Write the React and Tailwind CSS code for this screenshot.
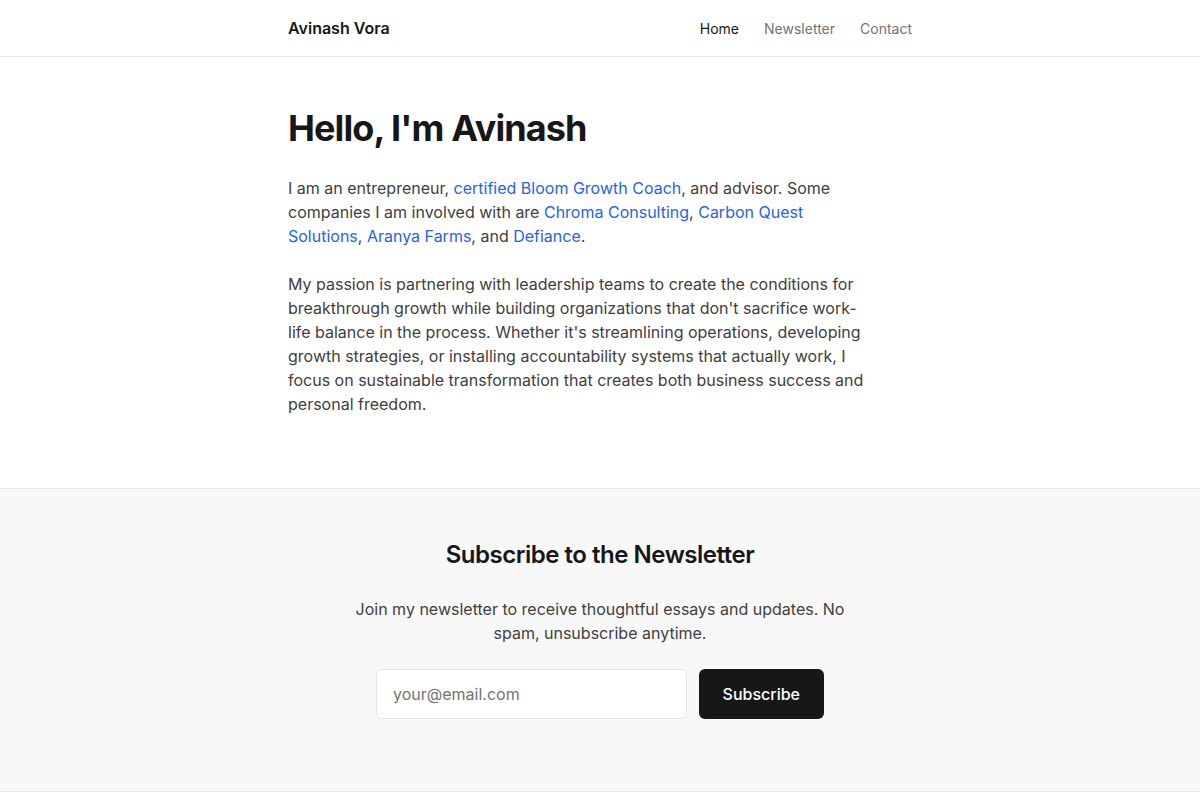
import { useState } from 'react';

const links = [
    { label: 'Home', active: true },
    { label: 'Newsletter', active: false },
    { label: 'Contact', active: false },
];

const A = ({ children }) => (
    <a href="#" className="text-[#2563eb] hover:underline">{children}</a>
);

const App = () => {
    const [email, setEmail] = useState('');

    return (
        <div className="min-h-screen bg-white text-[#171717]" style={{ fontFamily: 'Inter, "Noto Sans", sans-serif' }}>
            {/* Header */}
            <header className="border-b border-[#e5e5e5]">
                <div className="mx-auto max-w-[624px] h-14 flex items-center justify-between">
                    <a href="#" className="text-base font-semibold text-[#171717]">Avinash Vora</a>
                    <nav className="flex items-center gap-[25px] text-sm pt-0.5">
                        {links.map((l) => (
                            <a
                                key={l.label}
                                href="#"
                                className={l.active ? 'text-[#171717]' : 'text-[#737373] hover:text-[#171717]'}
                            >
                                {l.label}
                            </a>
                        ))}
                    </nav>
                </div>
            </header>

            {/* Intro */}
            <main className="mx-auto max-w-[624px] pt-[51px] pb-[72px]">
                <h1 className="text-4xl leading-10 font-bold tracking-tight mb-7">Hello, I'm Avinash</h1>
                <div className="max-w-xl text-base leading-6 text-[#404040] space-y-6">
                    <p>
                        I am an entrepreneur, <A>certified Bloom Growth Coach</A>, and advisor. Some companies I am
                        involved with are <A>Chroma Consulting</A>, <A>Carbon Quest Solutions</A>, <A>Aranya Farms</A>,
                        and <A>Defiance</A>.
                    </p>
                    <p>
                        My passion is partnering with leadership teams to create the conditions for breakthrough growth
                        while building organizations that don't sacrifice work-life balance in the process. Whether it's
                        streamlining operations, developing growth strategies, or installing accountability systems that
                        actually work, I focus on sustainable transformation that creates both business success and
                        personal freedom.
                    </p>
                </div>
            </main>

            {/* Newsletter */}
            <section className="border-y border-[#e5e5e5] bg-[#f8f8f8]">
                <div className="mx-auto max-w-[624px] pt-[50px] pb-[72px] flex flex-col items-center text-center">
                    <h2 className="text-2xl leading-8 font-semibold tracking-[-0.02em] mb-[26px]">Subscribe to the Newsletter</h2>
                    <p className="max-w-[500px] text-base leading-6 text-[#404040] mb-6">
                        Join my newsletter to receive thoughtful essays and updates. No spam, unsubscribe anytime.
                    </p>
                    <form onSubmit={(e) => e.preventDefault()} className="w-full max-w-md flex gap-3">
                        <input
                            type="email"
                            value={email}
                            onChange={(e) => setEmail(e.target.value)}
                            placeholder="your@email.com"
                            className="flex-1 min-w-0 h-[50px] px-4 rounded-md border border-[#e5e5e5] bg-white text-base text-[#171717] placeholder:text-[#737373] outline-none focus:border-[#a3a3a3]"
                        />
                        <button
                            type="submit"
                            className="h-[50px] px-6 rounded-md bg-[#171717] text-white text-base font-medium hover:bg-[#262626]"
                        >
                            Subscribe
                        </button>
                    </form>
                </div>
            </section>
        </div>
    );
};

export default App;
